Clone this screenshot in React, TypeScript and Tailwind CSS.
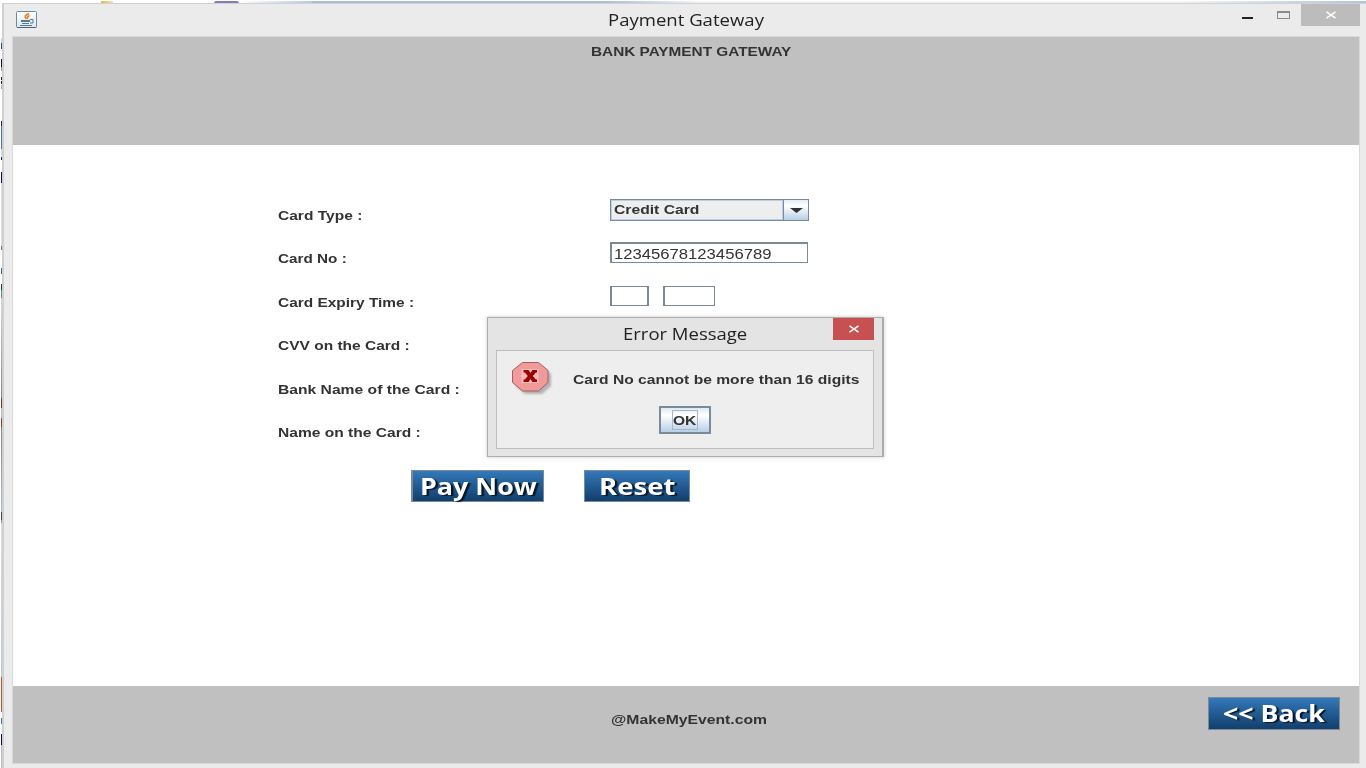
import React, { useLayoutEffect, useRef, useState } from "react";

/* Text stretched horizontally to fill its box, like a scaled Swing font. */
function Fit({ children, className }: { children: string; className: string }) {
  const box = useRef<HTMLSpanElement>(null);
  const inner = useRef<HTMLSpanElement>(null);
  const [k, setK] = useState(1);
  useLayoutEffect(() => {
    if (box.current && inner.current) {
      setK(box.current.clientWidth / inner.current.offsetWidth);
    }
  }, [children]);
  return (
    <span ref={box} className={`block shrink-0 whitespace-nowrap text-left ${className}`}>
      <span ref={inner} className="inline-block origin-left" style={{ transform: `scaleX(${k})` }}>
        {children}
      </span>
    </span>
  );
}

const label = "h-5 text-[13.5px] leading-5";
const labels = [
  { text: "Card Type :", w: "w-[84px]" },
  { text: "Card No :", w: "w-[69px]" },
  { text: "Card Expiry Time :", w: "w-[136px]" },
  { text: "CVV on the Card :", w: "w-[132px]" },
  { text: "Bank Name of the Card :", w: "w-[182px]" },
  { text: "Name on the Card :", w: "w-[143px]" },
];

const blueButton =
  "flex shrink-0 justify-center border border-[#7a8a99] bg-linear-to-b from-[#3379b9] to-[#123f6d] font-['Open_Sans',sans-serif] text-[22.5px] font-bold leading-[31px] text-white [text-shadow:2px_1px_1px_#081624]";

function JavaIcon() {
  return (
    <svg className="mt-[8px] ml-3 h-[17px] w-[21px] shrink-0" viewBox="0 0 21 17">
      <defs>
        <linearGradient id="jv" x1="0" y1="0" x2="0" y2="1">
          <stop offset="0" stopColor="#fff" />
          <stop offset="1" stopColor="#dfe6ea" />
        </linearGradient>
      </defs>
      <rect x=".5" y=".5" width="20" height="16" rx="1" fill="url(#jv)" stroke="#6d8ba0" />
      <path d="M1 16.5h19" stroke="#426782" />
      <path d="M13 2.500C9 4.500 8 5.500 10.500 8M13.500 4.500c-2 1-2.500 2-1.500 3.200" fill="none" stroke="#ec7d24" strokeWidth="1.700" />
      <path d="M5 9h9v2H5zM6 12h7v1H6zM4 14h12v1H4z" fill="#527b98" />
      <path d="M14 8.500h3v3.500h-3" fill="none" stroke="#527b98" />
    </svg>
  );
}

function ErrorIcon() {
  return (
    <svg className="ml-[15px] mt-[11px] h-[35px] w-[42px] shrink-0" viewBox="0 0 42 35">
      <defs>
        <filter id="soft" x="-20%" y="-20%" width="140%" height="140%">
          <feGaussianBlur stdDeviation="1.300" />
        </filter>
      </defs>
      <path d="M13 4h17l9 8v12l-9 8H13l-9-8V12z" fill="#777" opacity=".5" filter="url(#soft)" />
      <path d="M10.500 .5h16l9.500 8v12l-9.500 8.500h-16L.5 20.500v-12z" fill="#f09a9a" stroke="#a65f61" />
      <path d="M9.500 7h17v14h-17z" fill="#f8baba" />
      <path d="M11.500 8h5l2 3 2-3h4.500v2.500h-1.200l-3 3.500 3 3.500H25V20h-4.500l-2-3-2 3h-5v-2.500h1.300l3-3.500-3-3.500h-1.300z" fill="#990000" />
    </svg>
  );
}

function CloseX({ className }: { className: string }) {
  return (
    <svg className={className} viewBox="0 0 12 8">
      <path d="M1.500 .8l9 6.400M10.500 .8l-9 6.400" stroke="#fff" strokeWidth="1.500" />
    </svg>
  );
}

/* Slivers of the window lying behind the left edge. */
const slivers = [
  "h-[38px] bg-white", "h-[5px] bg-[#c5d5e8]", "h-[6px] bg-[#27517f]", "h-[10px] bg-white",
  "h-[8px] bg-[#15153f]", "h-[4px] bg-[#9a9391]", "h-[6px] bg-white", "h-[3px] bg-[#222]",
  "h-px bg-white", "h-[3px] bg-[#17172a]", "h-px bg-white", "h-[4px] bg-[#aaa]",
  "h-[32px] bg-white", "h-[5px] bg-[#202942]", "h-[23px] bg-[#5579a8]", "h-[8px] bg-[#d7e1ed]",
  "h-[3px] bg-[#15366d]", "h-[12px] bg-white", "h-[11px] bg-[#11114c]", "h-[63px] bg-[#e0e0e0]",
  "h-[4px] bg-[#777]", "h-[18px] bg-white", "h-[6px] bg-[#39689b]", "h-[10px] bg-white",
  "h-[6px] bg-[#26363d]", "h-[3px] bg-[#44a5c1]", "h-[5px] bg-[#927b6b]",
  "h-[100px] bg-linear-to-b from-[#d5dde0] to-[#888]", "h-[10px] bg-[#733b18]", "h-[10px] bg-[#bbb]",
  "h-[9px] bg-[#8a4c25]", "h-[85px] bg-linear-to-b from-[#888] to-[#b0bccb]",
  "h-[8px] bg-[#3b4b49]", "h-[3px] bg-[#999]",
  "h-[154px] bg-linear-to-b from-[#ddd] to-[#b8c6d5]", "h-[35px] bg-[#d4512b]",
  "h-[6px] bg-white", "h-[6px] bg-[#4875ad]", "h-[10px] bg-white", "h-[11px] bg-[#08085c]",
  "h-[23px] bg-[#bbb]",
];

export default function App() {
  return (
    <div className="relative flex h-[768px] w-[1366px] overflow-hidden bg-white font-['Liberation_Sans',sans-serif] font-bold text-[#333]">
      <div className="ml-px flex w-px shrink-0 flex-col overflow-hidden">
        {slivers.map((c, i) => (
          <div key={i} className={`shrink-0 ${c}`} />
        ))}
      </div>
      <div className="flex w-[1364px] flex-col">
        <div className="flex h-[3px] shrink-0 pt-px">
          <div className="w-[99px]" />
          <div className="w-[12px] bg-linear-to-r from-[#d3bd52] to-[#f1e6b4]" />
          <div className="w-[101px]" />
          <div className="w-[25px] rounded-t-full bg-[#8b79bd]" />
          <div className="w-[73px] bg-linear-to-r from-white to-[#b9c9dc]" />
          <div className="w-[290px] bg-[#a9bdd3]" />
          <div className="w-[100px] bg-linear-to-r from-[#a9bdd3] to-[#f4f6f7]" />
          <div className="w-[480px] bg-[#f1f4f5]" />
          <div className="flex-1 bg-linear-to-r from-[#f1f4f5] to-[#b2c5d5]" />
        </div>
        <div className="flex h-[765px] flex-col border-l-2 border-t border-[#d0d0d0] bg-[#ebebeb]">
          <header className="flex h-[32px] shrink-0">
            <div className="flex w-[604px] shrink-0">
              <div className="-mt-px">
                <JavaIcon />
              </div>
            </div>
            <Fit className="mt-[4px] h-6 w-[156px] font-['Open_Sans',sans-serif] text-[17px] font-normal leading-6 text-[#222]">
              Payment Gateway
            </Fit>
            <div className="ml-auto flex">
              <div className="mr-[24px] mt-[13px] h-[2px] w-[11px] bg-[#222]" />
              <div className="mr-[11px] mt-[7px] h-[8px] w-[13px] border border-t-2 border-[#8a8a8a]" />
              <div className="mr-[6px] flex h-[22px] w-[59px] justify-center bg-[#bcbcbc]">
                <CloseX className="mt-[7px] h-[8px] w-[12px]" />
              </div>
            </div>
          </header>
          <div className="ml-[8px] flex h-[728px] w-[1348px] flex-col border border-[#d9d9d9] bg-white">
            <div className="flex h-[108px] shrink-0 bg-[#c0c0c0] pl-[577.500px]">
              <Fit className="mt-[5px] h-5 w-[200px] text-[13.5px] leading-5">BANK PAYMENT GATEWAY</Fit>
            </div>
            <main className="flex h-[541px] shrink-0 flex-col pl-[265px]">
              <div className="flex pt-[54px]">
                <div className="flex h-[245px] w-[332px] shrink-0 flex-col gap-[23.400px] pt-[7px]">
                  {labels.map((l) => (
                    <Fit key={l.text} className={`${label} ${l.w}`}>
                      {l.text}
                    </Fit>
                  ))}
                </div>
                <div className="flex flex-col">
                  <div className="flex h-[22px] w-[199px] border border-[#7a8a99]">
                    <div className="flex w-[172px] shrink-0 border border-[#b8cfe5] bg-[#eee] pl-[2px]">
                      <Fit className="mt-[-1px] h-5 w-[86px] text-[13.5px] leading-5">Credit Card</Fit>
                    </div>
                    <div className="flex flex-1 items-center justify-center border-l border-[#7a8a99] bg-linear-to-b from-[#e4edf5] via-white via-30% to-[#b8cfe5]">
                      <svg className="mt-px h-[5px] w-[13px]" viewBox="0 0 13 5">
                        <path d="M0 0h13L6.500 5z" fill="#333" />
                      </svg>
                    </div>
                  </div>
                  <div className="mt-[21px] flex h-[21px] w-[198px] border border-l-2 border-t-2 border-[#7a8a99] pl-[2px]">
                    <Fit className="h-5 w-[157px] text-[14px] font-normal leading-5">12345678123456789</Fit>
                  </div>
                  <div className="mt-[23px] flex gap-[14px]">
                    <div className="h-[20px] w-[39px] border border-x-2 border-[#7a8a99]" />
                    <div className="h-[20px] w-[52px] border border-l-2 border-[#7a8a99]" />
                  </div>
                </div>
              </div>
              <div className="mt-[26px] flex gap-[40px] pl-[133px]">
                <button className={`${blueButton} h-[32px] w-[133px] border-l-2`}>
                  <Fit className="h-8 w-[117px]">Pay Now</Fit>
                </button>
                <button className={`${blueButton} h-[32px] w-[106px]`}>
                  <Fit className="h-8 w-[76px]">Reset</Fit>
                </button>
              </div>
            </main>
            <footer className="flex h-[77px] shrink-0 bg-[#c0c0c0] pl-[597.500px]">
              <Fit className="mt-[24px] h-5 w-[156px] text-[13.5px] leading-5">@MakeMyEvent.com</Fit>
              <button className={`${blueButton} ml-auto mr-[19px] mt-[11px] h-[33px] w-[132px]`}>
                <Fit className="h-8 w-[102px]">{"<< Back"}</Fit>
              </button>
            </footer>
          </div>
        </div>
      </div>

      <div className="absolute left-[487px] top-[317px] flex h-[140px] w-[397px] flex-col border border-r-2 border-[#adadad] bg-[#e4e4e4] shadow-[0_0_4px_rgba(0,0,0,0.2)]">
        <div className="flex h-[32px] shrink-0 pl-[135px]">
          <Fit className="mt-[4px] h-6 w-[124px] font-['Open_Sans',sans-serif] text-[17px] font-normal leading-6 text-[#222]">
            Error Message
          </Fit>
          <div className="ml-auto mr-[8px] flex h-[22px] w-[41px] justify-center bg-[#c75050]">
            <CloseX className="ml-px mt-[7px] h-[8px] w-[12px]" />
          </div>
        </div>
        <div className="ml-[8px] flex h-[99px] w-[378px] flex-col border border-[#bebebe] bg-[#eee]">
          <div className="flex h-[55px] shrink-0">
            <ErrorIcon />
            <Fit className="ml-[19px] mt-[19px] h-5 w-[287px] text-[13.5px] leading-5">
              Card No cannot be more than 16 digits
            </Fit>
          </div>
          <button className="ml-[162px] flex h-[28px] w-[52px] items-center justify-center border-2 border-[#7a8a99] bg-linear-to-b from-[#dfe9f3] via-white via-30% to-[#b8cfe5]">
            <span className="flex h-[20px] w-[26px] border border-[#a3b8cc]">
              <Fit className="h-5 w-[23px] text-[13.5px] leading-[19px]">OK</Fit>
            </span>
          </button>
        </div>
      </div>
    </div>
  );
}
